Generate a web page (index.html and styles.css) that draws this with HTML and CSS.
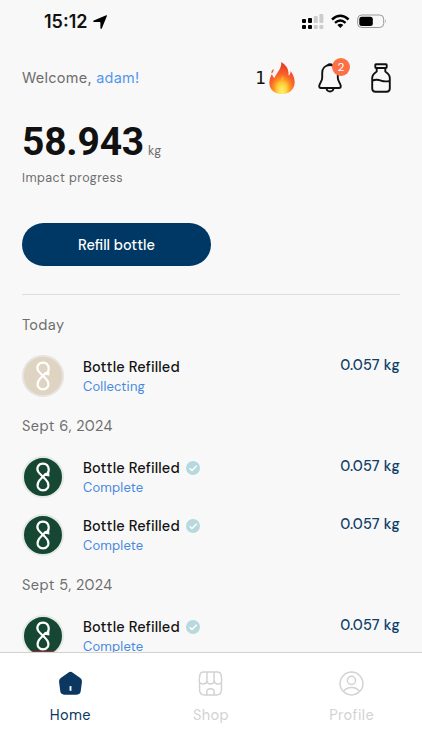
FILE: index.html
```html
<!DOCTYPE html>
<html lang="en">
<head>
<meta charset="utf-8">
<meta name="viewport" content="width=device-width, initial-scale=1">
<title>Impact</title>
<link rel="stylesheet" href="styles.css">
</head>
<body>
<svg class="defs" width="0" height="0" aria-hidden="true">
  <symbol id="loop" viewBox="0 0 16 30"><path d="M12.800 11C15 6.500 13 1.600 8 1.600C3 1.600 1 6.500 3.400 10C5.400 13 11 16.500 12.800 20.500C14.600 25 12 28.400 8 28.400C4 28.400 1.400 25 3.200 20.500C4.400 17.500 8 15 10.500 12" fill="none" stroke="#fff" stroke-width="2.200" stroke-linecap="round"/><path d="M14.200 8.500L14.400 14.500L8.200 13.600Z" fill="#fff"/></symbol>
  <symbol id="check" viewBox="0 0 14 14"><circle cx="7" cy="7" r="7" fill="#b7d9dd"/><path d="M3.500 7.200L6 9.600L10.700 4.700" fill="none" stroke="#fff" stroke-width="1.400"/></symbol>
</svg>
<div class="app">
  <header class="status">
    <span class="time">15:12</span>
    <svg class="arrow" viewBox="0 0 14 14"><path d="M13.200.2Q14.200-.1 13.900.9L8.900 13.200Q8 14.700 7.400 13.200V7.600Q7.300 7 6.700 7H.9Q-.8 6.500.8 5.500Z"/></svg>
    <svg class="signals" viewBox="0 0 86 18">
      <g fill="#000"><rect x="0" y="5" width="4" height="4" rx="1"/><rect x="6" y="4" width="4" height="5" rx="1"/><rect x="0" y="11" width="4" height="4" rx="1"/><rect x="6" y="11" width="4" height="4" rx="1"/></g>
      <g fill="#ccc"><rect x="11.800" y="2" width="4" height="7" rx="1"/><rect x="17.400" y="0" width="4" height="9" rx="1"/><rect x="11.800" y="11" width="4" height="4" rx="1"/><rect x="17.400" y="11" width="4" height="4" rx="1"/></g>
      <g fill="none" stroke="#000" stroke-width="2.400"><path d="M30 5.500Q38.300-2 46.600 5.500M33 8.800Q38.300 4 43.600 8.800"/></g>
      <path d="M35.300 11Q38.300 8.500 41.300 11L38.300 14Z"/>
      <rect x="55.700" y="1" width="26" height="12.500" rx="4" fill="none" stroke="#999"/><rect x="57.300" y="2.700" width="13.500" height="9.200" rx="2.500"/><path d="M83 5.200Q84.800 7.200 83 9.200Z" fill="#999"/>
    </svg>
  </header>
  <main class="content">
    <div class="greeting">
      <p class="welcome">Welcome, <b>adam!</b></p>
      <div class="actions">
        <span class="streak">1</span>
        <svg class="fire" viewBox="0 0 26 32">
          <defs><radialGradient id="flame" cx=".5" cy=".86" r=".72"><stop offset="0" stop-color="#fffba8"/><stop offset=".2" stop-color="#ffe345"/><stop offset=".42" stop-color="#ff9c22"/><stop offset=".65" stop-color="#f9652a"/><stop offset="1" stop-color="#e9432b"/></radialGradient></defs>
          <path d="M12.200 0C18 3.500 20 8 19.500 13.500C21 12.800 21.600 11 21.500 9C24.500 13 26.200 17.500 25.500 22C24.500 28.500 19.500 32 13 32C6 32 .8 28 .4 21.500C.1 18 1.500 14.500 3 12C3.500 14 4.200 15.300 5.500 16C7 11 12.700 7.500 12.200 0Z" fill="url(#flame)"/>
          <path d="M4.800 7Q2 8.200 2.500 11.500Q5 9.800 4.800 7Z" fill="#f15a33"/>
          <path d="M13.500 13C16 16 14 20 17.500 19C19 21 21 28 13 30C6 29 5.500 25 8 20C9 21 12.500 18 13.500 13Z" fill="#ffc93c" opacity=".35"/>
        </svg>
        <div class="bell">
          <svg viewBox="0 0 24 30" fill="none" stroke="#111" stroke-width="1.900" stroke-linejoin="round" stroke-linecap="round"><path d="M9.500 2.200Q12 .4 14.500 2.200M12 2C7 2 4.200 5.500 4.200 10V15C4.200 18.500 1.200 20.500 1.200 23C1.200 24.500 2 25 3 25H21C22 25 22.800 24.500 22.800 23C22.800 20.500 19.800 18.500 19.800 15V10C19.800 5.500 17 2 12 2ZM8.500 25.500C9 29.500 15 29.500 15.500 25.500"/></svg>
          <span class="badge">2</span>
        </div>
        <svg class="bottle" viewBox="0 0 20 30" fill="none" stroke="#111" stroke-width="1.900" stroke-linejoin="round"><path d="M5 1.200H15Q15.700 1.200 15.700 2V4.300Q15.700 5 15 5H5Q4.300 5 4.300 4.300V2Q4.300 1.200 5 1.200ZM5.700 5V8.500Q1.200 11.500 1.200 15V25.500Q1.200 28.700 4.500 28.700H15.500Q18.800 28.700 18.800 25.500V15Q18.800 11.500 14.300 8.500V5M1.200 17.800C5 16 7 16.500 10 17.600S16 18.600 18.800 17.800"/></svg>
      </div>
    </div>
    <p class="total"><strong>58.943</strong><span>kg</span></p>
    <p class="caption">Impact progress</p>
    <button class="refill">Refill bottle</button>
    <section class="history">
      <h2>Today</h2>
      <article class="row">
        <span class="avatar sand"><svg><use href="#loop"/></svg></span>
        <div class="info"><h3>Bottle Refilled</h3><p>Collecting</p></div>
        <span class="weight">0.057 kg</span>
      </article>
      <h2>Sept 6, 2024</h2>
      <article class="row">
        <span class="avatar"><svg><use href="#loop"/></svg></span>
        <div class="info"><h3>Bottle Refilled <svg><use href="#check"/></svg></h3><p>Complete</p></div>
        <span class="weight">0.057 kg</span>
      </article>
      <article class="row">
        <span class="avatar"><svg><use href="#loop"/></svg></span>
        <div class="info"><h3>Bottle Refilled <svg><use href="#check"/></svg></h3><p>Complete</p></div>
        <span class="weight">0.057 kg</span>
      </article>
      <h2>Sept 5, 2024</h2>
      <article class="row">
        <span class="avatar ribbon"><svg><use href="#loop"/></svg></span>
        <div class="info"><h3>Bottle Refilled <svg><use href="#check"/></svg></h3><p>Complete</p></div>
        <span class="weight">0.057 kg</span>
      </article>
    </section>
  </main>
  <nav class="tabs">
    <a class="tab active"><svg viewBox="0 0 24 24"><path d="M9.800 1.600Q12 0 14.200 1.600L21.400 6.600Q23.300 8 23 10.200L21.800 19.500Q21.300 22.700 18 22.700H6Q2.700 22.700 2.200 19.500L1 10.200Q.7 8 2.600 6.600Z" fill="currentColor"/><path d="M12 14.500V19" stroke="#fff" stroke-width="1.800"/></svg><span>Home</span></a>
    <a class="tab"><svg viewBox="0 0 24 24" fill="none" stroke="currentColor" stroke-width="1.400"><path d="M5.500 1H18.500Q22 1 22.300 4.500L22.800 9Q22.800 12.500 19.500 12.500Q15.700 12.500 15.500 9.500Q15 12.500 12 12.500T8.500 9.500Q8.300 12.500 4.500 12.500Q1.200 12.500 1.200 9L1.700 4.500Q2 1 5.500 1ZM8.700 1L8.500 9.500M15.300 1L15.500 9.500M1.500 11V18Q1.500 23 6.500 23H17.500Q22.500 23 22.500 18V11M8.500 23V20Q8.500 17 12 17T15.500 20V23"/></svg><span>Shop</span></a>
    <a class="tab"><svg viewBox="0 0 24 24" fill="none" stroke="currentColor" stroke-width="1.400"><circle cx="12" cy="12" r="11"/><circle cx="12" cy="9" r="3.900"/><path d="M4.200 19.700Q7 15.800 12 15.800T19.800 19.700"/></svg><span>Profile</span></a>
  </nav>
</div>
</body>
</html>
```
FILE: styles.css
```css
* { box-sizing: border-box; margin: 0; padding: 0; }
body { background: #f8f8f8; font-family: "DM Sans", Inter, sans-serif; color: #111; }
.defs { display: block; height: 0; }
.app { height: 750px; display: flex; flex-direction: column; overflow: hidden; }
.status { flex: none; height: 44px; padding: 0 36px 0 44px; display: flex; align-items: center; }
.time { font: 600 18px/22px Inter, sans-serif; }
.arrow { width: 14px; height: 14px; margin-left: 5px; }
.signals { width: 86px; height: 18px; margin: 1px -2px 0 auto; }
.content { flex: 1; min-height: 0; overflow: hidden; padding: 12px 22px 0; }
.greeting { height: 44px; display: flex; align-items: center; justify-content: space-between; }
.welcome { font: 14.500px/20px Inter, sans-serif; letter-spacing: .25px; color: #6d6d6d; }
.welcome b { color: #5596ee; font-weight: 400; }
.actions { display: flex; align-items: center; margin-right: 9px; }
.streak { font: 17px/20px "DejaVu Sans", sans-serif; }
.fire { width: 26px; height: 32px; margin-left: 3px; }
.bell { position: relative; width: 24px; height: 30px; margin-left: 23px; }
.bell svg { display: block; width: 24px; height: 30px; }
.badge { position: absolute; left: 14px; top: -5px; width: 18px; height: 18px; border-radius: 50%; background: #fb7047; color: #fff; font-size: 12px; line-height: 18px; text-align: center; }
.bottle { width: 20px; height: 30px; margin-left: 29px; }
.total { display: flex; align-items: baseline; height: 50px; margin-top: 17px; }
.total strong { font: 700 39px/50px Roboto, sans-serif; letter-spacing: -.2px; }
.total span { margin-left: 4px; font-size: 12.500px; color: #6d6d6d; }
.caption { margin-top: 2px; font-size: 12.500px; line-height: 18px; letter-spacing: .45px; color: #6d6d6d; }
.refill { display: block; margin-top: 36px; width: 189px; height: 43px; border: 0; border-radius: 22px; background: #003865; color: #fff; font: 500 14.500px "DM Sans", Inter, sans-serif; }
.history { margin-top: 28px; border-top: 1px solid #ddd; padding-top: 19px; }
.history h2 { font-size: 14.500px; line-height: 22px; font-weight: 400; letter-spacing: .45px; color: #6d6d6d; }
.row { display: flex; height: 58px; }
h2 + .row { margin-top: 10px; }
.row + h2 { margin-top: 11px; }
.avatar { flex: none; width: 42px; height: 42px; margin-top: 9px; border: 2px solid #e3e9e5; border-radius: 50%; background: #154733; display: grid; place-items: center; }
.avatar svg { width: 16px; height: 30px; }
.sand { background: #dfd3c2; border-color: #e5e2df; }
.ribbon { background: linear-gradient(#154733 34px, #942d38 34px); }
.info { margin: 11px 0 0 19px; }
.info h3 { display: flex; align-items: center; font-size: 14.500px; line-height: 20px; font-weight: 500; letter-spacing: .15px; }
.info h3 svg { width: 14px; height: 14px; margin-left: 6px; }
.info p { font-size: 13px; line-height: 20px; letter-spacing: .15px; color: #4788df; }
.weight { margin: 9px 0 0 auto; font-size: 14.500px; line-height: 20px; font-weight: 500; letter-spacing: .2px; color: #123e68; }
.tabs { flex: none; height: 98px; border-top: 1px solid #d2d2d2; background: #fff; display: grid; grid-template-columns: repeat(3, 1fr); }
.tab { display: flex; flex-direction: column; align-items: center; padding-top: 18px; color: #d2d2d2; }
.tab svg { width: 25px; height: 25px; }
.tab span { margin-top: 9px; font-size: 14.500px; line-height: 20px; letter-spacing: .4px; }
.active { color: #0b3760; }
```
